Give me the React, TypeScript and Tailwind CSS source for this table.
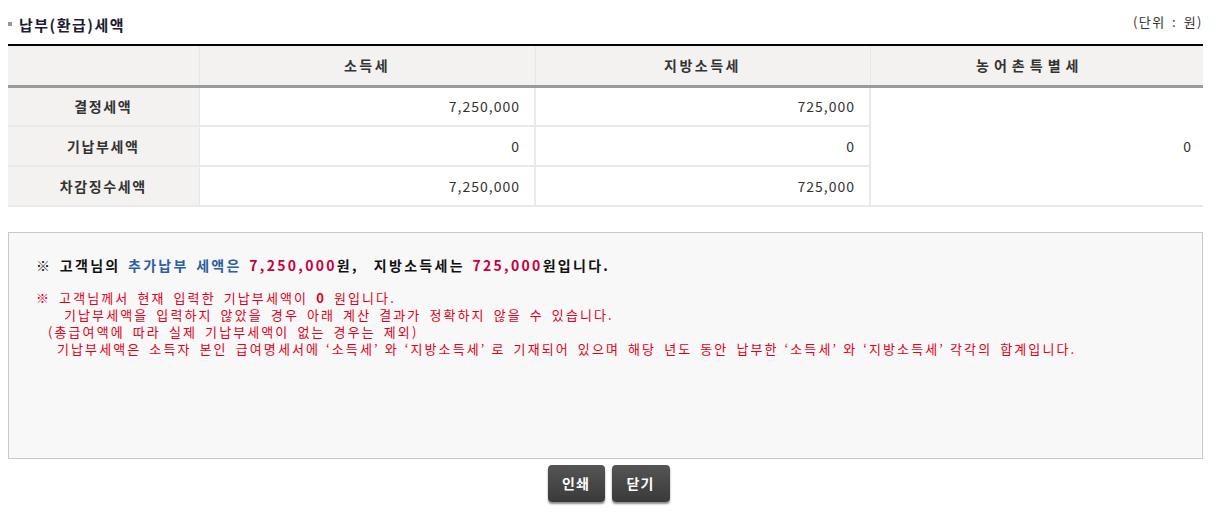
const font = { fontFamily: '"Noto Sans CJK KR", "Noto Sans", sans-serif' };

const rows = [
  { label: "결정세액", income: "7,250,000", local: "725,000" },
  { label: "기납부세액", income: "0", local: "0" },
  { label: "차감징수세액", income: "7,250,000", local: "725,000" },
];

// full-width style quotes like the original gulim rendering
const Open = () => <span className="ml-[6px]">‘</span>;
const Close = () => <span className="mr-[5px]">’</span>;

export default function App() {
  return (
    <div className="w-[1221px] h-[513px] bg-white pl-2 text-[#333]" style={font}>
      <div className="w-[1195px]">
        <div className="flex justify-between h-[44px]">
          <div className="flex items-center mt-[14px] h-[22px]">
            <span className="w-[4px] h-[4px] bg-[#9a9a9a] mr-[7px] -mt-[3px]" />
            <h2 className="text-[15px] font-bold text-[#1b1b35] tracking-[1.5px]">납부(환급)세액</h2>
          </div>
          <span className="mt-[12px] h-[20px] text-[13px] leading-[20px] text-[#333] tracking-[1.5px] [word-spacing:2px]">(단위 : 원)</span>
        </div>

        <table className="w-full border-collapse text-[14px] border-t-2 border-black">
          <thead>
            <tr className="h-[41px] bg-[#f3f2f0] border-b-[3px] border-[#9b9b9b]">
              <th className="w-[191px] border-r border-[#e6e6e6]" />
              <th className="w-[336px] font-bold border-r border-[#e6e6e6] tracking-[2.5px]">소득세</th>
              <th className="w-[335px] font-bold border-r border-[#e6e6e6] tracking-[2.5px]">지방소득세</th>
              <th className="font-bold tracking-[5px] pr-[14px]">농어촌특별세</th>
            </tr>
          </thead>
          <tbody>
            {rows.map((r, i) => (
              <tr key={r.label} className="h-[40px] border-b-2 border-[#e9e9e9]">
                <th className="bg-[#f3f2f0] font-bold border-r border-[#e6e6e6] tracking-[1.6px]">{r.label}</th>
                <td className="text-right pr-[14px] border-r-2 border-[#e9e9e9] tracking-[1px]">{r.income}</td>
                <td className="text-right pr-[14px] border-r-2 border-[#e9e9e9] tracking-[1px]">{r.local}</td>
                {i === 0 && (
                  <td rowSpan={3} className="text-right pr-[12px]">0</td>
                )}
              </tr>
            ))}
          </tbody>
        </table>

        <div className="mt-[25px] h-[227px] border border-[#c9c9c9] bg-[#f8f8f8] pt-[21px] pl-[27px]">
          <p className="text-[14px] font-bold text-[#111] leading-[22px] tracking-[2.3px] [word-spacing:2px]">
            ※ 고객님의 <span className="text-[#2c5f9e]">추가납부 세액은</span>{" "}
            <span className="text-[#c5003c]">7,250,000</span>원,&nbsp; 지방소득세는{" "}
            <span className="text-[#c5003c]">725,000</span>원입니다.
          </p>
          <div className="mt-[13px] text-[13px] leading-[17px] text-[#e0001b] tracking-[2.1px] [word-spacing:3px]">
            <p>
              ※ 고객님께서 현재 입력한 기납부세액이 <b>0</b> 원입니다.
            </p>
            <p className="pl-[28px]">기납부세액을 입력하지 않았을 경우 아래 계산 결과가 정확하지 않을 수 있습니다.</p>
            <p className="pl-[12px]">(총급여액에 따라 실제 기납부세액이 없는 경우는 제외)</p>
            <p className="pl-[21px]">
              기납부세액은 소득자 본인 급여명세서에<Open />소득세<Close />와<Open />지방소득세<Close />로 기재되어 있으며 해당 년도 동안 납부한<Open />소득세<Close />와<Open />지방소득세<Close />각각의 합계입니다.
            </p>
          </div>
        </div>
      </div>

      <div className="flex justify-center gap-[7px] mt-[6px] w-full pr-[12px]">
        <button className="w-[57px] h-[37px] rounded-[4px] bg-gradient-to-b from-[#555] to-[#3a3a3a] text-white text-[14px] font-bold tracking-[1px] shadow-[0_2px_2px_rgba(0,0,0,0.45)]">
          인쇄
        </button>
        <button className="w-[58px] h-[37px] rounded-[4px] bg-gradient-to-b from-[#555] to-[#3a3a3a] text-white text-[14px] font-bold tracking-[1px] shadow-[0_2px_2px_rgba(0,0,0,0.45)]">
          닫기
        </button>
      </div>
    </div>
  );
}
